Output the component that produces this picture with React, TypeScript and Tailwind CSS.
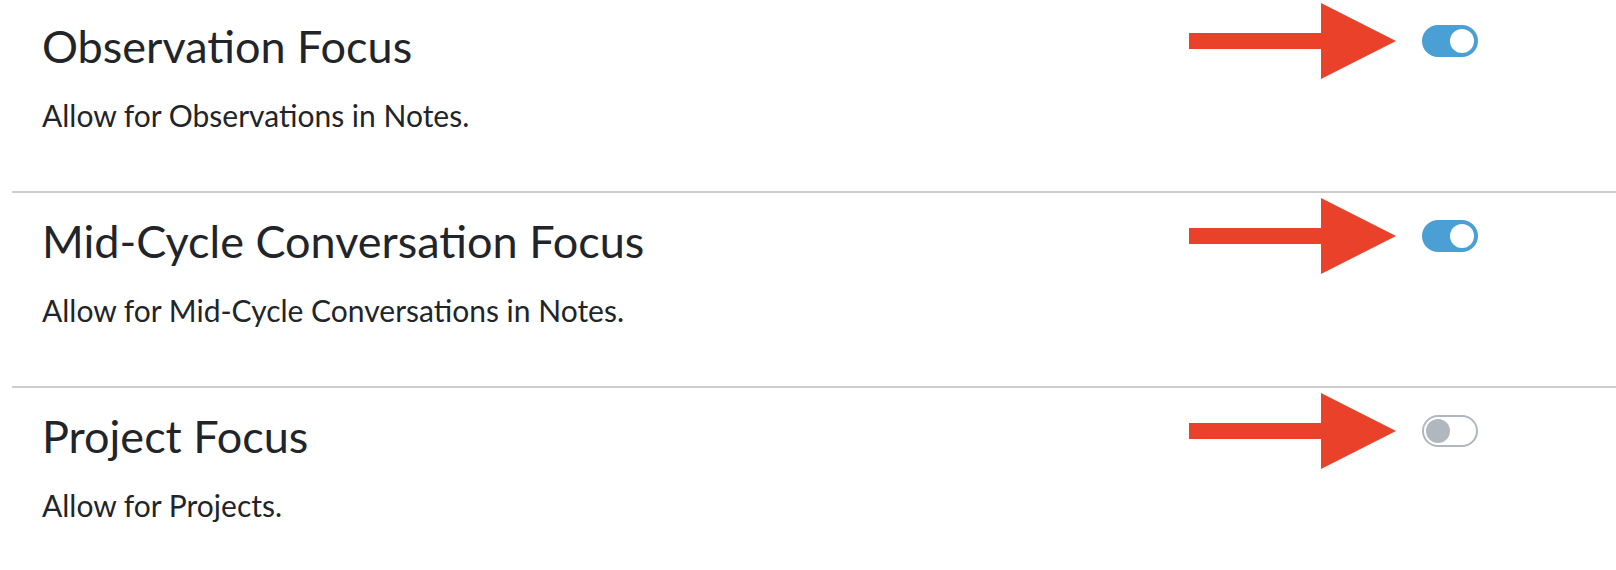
import { useState } from 'react';

interface FocusSetting {
  id: string;
  title: string;
  description: string;
  enabled: boolean;
}

const SETTINGS: FocusSetting[] = [
  {
    id: 'observation',
    title: 'Observation Focus',
    description: 'Allow for Observations in Notes.',
    enabled: true,
  },
  {
    id: 'mid-cycle',
    title: 'Mid-Cycle Conversation Focus',
    description: 'Allow for Mid-Cycle Conversations in Notes.',
    enabled: true,
  },
  {
    id: 'project',
    title: 'Project Focus',
    description: 'Allow for Projects.',
    enabled: false,
  },
];

function Arrow() {
  return (
    <svg width="207" height="76" viewBox="0 0 207 76" aria-hidden="true">
      <rect x="0" y="30" width="134" height="16" fill="#e9412a" />
      <polygon points="132,0 207,38 132,76" fill="#e9412a" />
    </svg>
  );
}

function Toggle({ on, onChange }: { on: boolean; onChange: () => void }) {
  return (
    <button
      type="button"
      role="switch"
      aria-checked={on}
      onClick={onChange}
      className={[
        'flex h-[32px] w-[56px] items-center rounded-full border-2 p-[2px]',
        on ? 'justify-end border-[#4aa0d5] bg-[#4aa0d5]' : 'justify-start border-[#b1b7bf] bg-white',
      ].join(' ')}
    >
      <span
        className={[
          'block h-[24px] w-[24px] rounded-full',
          on ? 'bg-white' : 'bg-[#b1b7bf]',
        ].join(' ')}
      />
    </button>
  );
}

export default function App() {
  const [settings, setSettings] = useState(SETTINGS);

  function toggle(id: string) {
    setSettings((prev) =>
      prev.map((s) => (s.id === id ? { ...s, enabled: !s.enabled } : s)),
    );
  }

  return (
    <div
      className="h-[570px] overflow-hidden bg-white pl-[12px] text-[#212529]"
      style={{ fontFamily: 'Lato, "Noto Sans", sans-serif' }}
    >
      <div className="-mt-[2px]">
        {settings.map((s, i) => (
          <section
            key={s.id}
            className={[
              'flex h-[195px] justify-between pl-[30px] pr-[138px]',
              i < settings.length - 1 ? 'border-b-2 border-[#cccccc]' : '',
            ].join(' ')}
          >
            <div className="pt-[20px]">
              <h2 className="text-[45px] leading-[56px] font-normal">{s.title}</h2>
              <p className="mt-[23px] text-[30px] leading-[36px]">{s.description}</p>
            </div>
            <div className="mt-[5px] flex h-[76px] items-center gap-[26px]">
              <Arrow />
              <Toggle on={s.enabled} onChange={() => toggle(s.id)} />
            </div>
          </section>
        ))}
      </div>
    </div>
  );
}
